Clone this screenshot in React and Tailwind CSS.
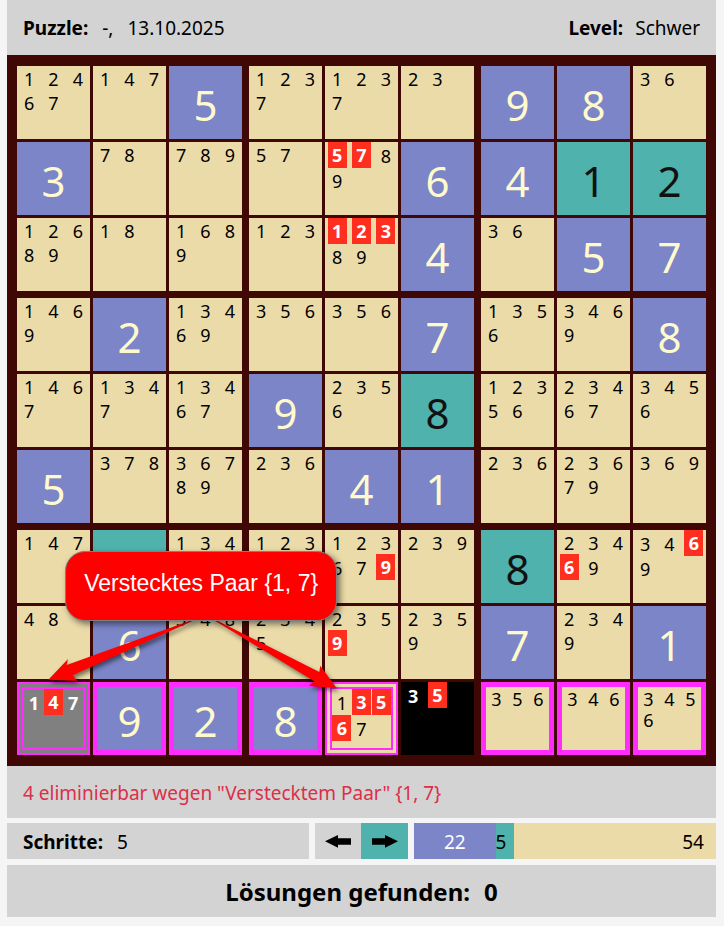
import React from "react";

// Each cell: "g5" given digit, "s8" solved digit, otherwise its candidates.
// A "!" after a candidate marks it as eliminated.
const BOARD = [
  ["1 2 4 6 7", "1 4 7", "g5", "1 2 3 7", "1 2 3 7", "2 3", "g9", "g8", "3 6"],
  ["g3", "7 8", "7 8 9", "5 7", "5! 7! 8 9", "g6", "g4", "s1", "s2"],
  ["1 2 6 8 9", "1 8", "1 6 8 9", "1 2 3", "1! 2! 3! 8 9", "g4", "3 6", "g5", "g7"],
  ["1 4 6 9", "g2", "1 3 4 6 9", "3 5 6", "3 5 6", "g7", "1 3 5 6", "3 4 6 9", "g8"],
  ["1 4 6 7", "1 3 4 7", "1 3 4 6 7", "g9", "2 3 5 6", "s8", "1 2 3 5 6", "2 3 4 6 7", "3 4 5 6"],
  ["g5", "3 7 8", "3 6 7 8 9", "2 3 6", "g4", "g1", "2 3 6", "2 3 6 7 9", "3 6 9"],
  ["1 4 7", "s", "1 3 4", "1 2 3", "1 2 3 6 7 9!", "2 3 9", "s8", "2 3 4 6! 9", "3 4 6! 9"],
  ["4 8", "g6", "3 4 8", "2 3 4 5", "2 3 5 9!", "2 3 5 9", "g7", "2 3 4 9", "g1"],
  ["1 4! 7", "g9", "g2", "g8", "1 3! 5! 6! 7", "3 5!", "3 5 6", "3 4 6", "3 4 5 6"],
];

const HIGHLIGHT = {
  row: "border-[5px] border-[#ff2bff]",
  pair: "border-[7px] border-double border-[#ff2bff]",
};

function highlightOf(row, col) {
  if (row !== 8 || col === 5) return "";
  return col === 0 || col === 4 ? HIGHLIGHT.pair : HIGHLIGHT.row;
}

function Cell({ row, col }) {
  const value = BOARD[row][col];
  const frame = highlightOf(row, col);

  if (value[0] === "g" || value[0] === "s") {
    const tone =
      value[0] === "g" ? "bg-[#7b85c7] text-[#fffacd]" : "bg-[#50b2ac] text-[#111111]";
    return (
      <div className={`flex aspect-square items-center justify-center pt-[4px] text-[42px] leading-none ${tone} ${frame}`}>
        {value.slice(1)}
      </div>
    );
  }

  let tone = "bg-[#ebdba9] text-black";
  if (row === 8 && col === 0) tone = "bg-[#808080] font-bold text-white";
  if (row === 8 && col === 5) tone = "bg-black font-bold text-white";

  return (
    <div className={`grid aspect-square grid-cols-3 grid-rows-[1fr_1fr_1fr] items-center justify-items-center text-[18px] leading-none ${tone} ${frame}`}>
      {value.split(" ").map((c) =>
        c.endsWith("!") ? (
          <span key={c} className="flex h-[26px] w-[19px] items-center justify-center bg-[#ff2f20] font-bold text-white">
            {c[0]}
          </span>
        ) : (
          <span key={c} className="pt-[2px]">{c}</span>
        )
      )}
    </div>
  );
}

function Callout() {
  return (
    <>
      <svg
        viewBox="0 0 709 711"
        className="absolute inset-0 h-full w-full drop-shadow-[2px_3px_2px_rgba(0,0,0,0.5)]"
        aria-hidden="true"
      >
        <path d="M185 565 L59.7 610 L61 604 L41.3 624.7 L70 625.7 L65.7 620.3 L190 564 Z" fill="#ff0000" />
        <path d="M207 564 L312.3 617 L313.3 610.7 L329.7 633.3 L302 630.7 L307.3 626.3 L205 564 Z" fill="#ff0000" />
      </svg>
      <div className="absolute left-[8.2%] top-[69.7%] flex h-[70px] w-[272px] items-center justify-center whitespace-nowrap rounded-[20px] border border-[#808080] bg-[#ff0000] pb-[4px] font-['Liberation_Sans',Arial,sans-serif] text-[23px] text-white shadow-[3px_3px_6px_rgba(0,0,0,0.5)]">
        Verstecktes Paar {"{1, 7}"}
      </div>
    </>
  );
}

function Board() {
  const three = [0, 1, 2];
  return (
    <section className="relative grid grid-cols-3 gap-[7px] bg-[#400804] px-[10px] py-[11px]" aria-label="Sudoku">
      {three.map((br) =>
        three.map((bc) => (
          <div key={`${br}${bc}`} className="grid grid-cols-3 gap-[3px]">
            {three.map((r) =>
              three.map((c) => <Cell key={`${r}${c}`} row={br * 3 + r} col={bc * 3 + c} />)
            )}
          </div>
        ))
      )}
      <Callout />
    </section>
  );
}

function Arrow({ flip }) {
  return (
    <svg viewBox="0 0 26 13" className={flip ? "h-[13px] w-[26px] -scale-x-100" : "h-[13px] w-[26px]"} aria-hidden="true">
      <path d="M0 6.3 L13 0 V3.3 H26 V9.7 H13 V12.7 Z" fill="#000" />
    </svg>
  );
}

export default function App() {
  return (
    <div className="min-h-screen bg-[#f5f5f5] pl-[7px] pr-[8px] font-['Noto_Sans','Open_Sans',sans-serif] text-[19px] text-black">
      <header className="flex h-[55px] items-center justify-between bg-[#d3d3d3] px-4 pt-[2px]">
        <p className="flex gap-[14px]">
          <b>Puzzle:</b>
          <span>-,</span>
          <span>13.10.2025</span>
        </p>
        <p className="flex gap-3">
          <b>Level:</b>
          <span>Schwer</span>
        </p>
      </header>

      <Board />

      <p className="flex h-[52px] items-center bg-[#d3d3d3] px-4 pt-[2px] text-[#dc2f4a]">
        4 eliminierbar wegen "Verstecktem Paar" {"{1, 7}"}
      </p>

      <div className="mt-[5px] grid h-[36px] grid-cols-[1fr_auto_1fr] gap-[6px]">
        <p className="flex items-center gap-[14px] bg-[#d3d3d3] px-4 pt-[2px]">
          <b>Schritte:</b>
          <span>5</span>
        </p>
        <div className="flex">
          <button type="button" aria-label="Schritt zurück" className="flex w-[46px] items-center justify-center bg-[#d3d3d3]">
            <Arrow />
          </button>
          <button type="button" aria-label="Schritt vor" className="flex w-[47px] items-center justify-center bg-[#50b2ac]">
            <Arrow flip />
          </button>
        </div>
        <div className="flex">
          <span className="flex w-[27%] items-center justify-center bg-[#7b85c7] pt-[2px] text-white">22</span>
          <span className="flex w-[6%] items-center bg-[#50b2ac] pt-[2px]">5</span>
          <span className="flex flex-1 items-center justify-end bg-[#ebdba9] pr-3 pt-[2px]">54</span>
        </div>
      </div>

      <p className="mt-[6px] flex h-[52px] items-center justify-center gap-[14px] bg-[#d3d3d3] pt-[2px] text-[24px] font-bold">
        <span>Lösungen gefunden:</span>
        <span>0</span>
      </p>
    </div>
  );
}
